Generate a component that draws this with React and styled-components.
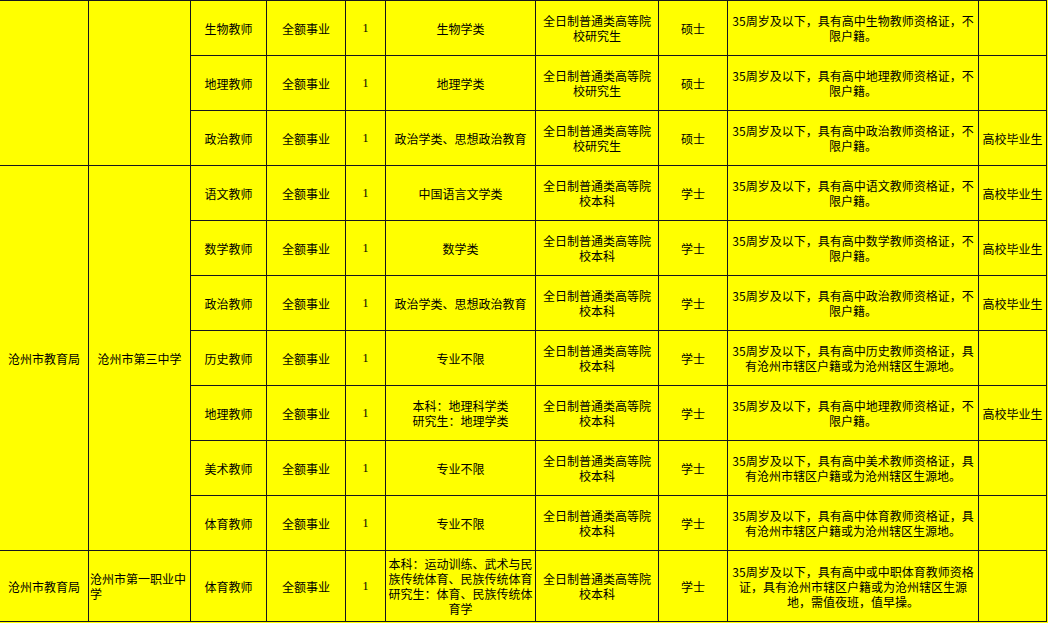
import React from 'react';
import styled, { createGlobalStyle } from 'styled-components';

const GlobalStyle = createGlobalStyle`
  html, body {
    margin: 0;
    padding: 0;
    background: #ffff00;
  }
  body {
    font-family: "Noto Sans CJK SC", "Noto Sans", sans-serif;
    color: #000;
  }
`;

const Sheet = styled.div`
  display: grid;
  grid-template-columns: 88px 101px 75px 78px 39px 149px 122px 68px 250px 67px;
  grid-template-rows: repeat(10, 54px) 70px;
  gap: 1px;
  padding: 1px 1px 1px 0;
  width: max-content;
  background: #16161e;
`;

const Cell = styled.div`
  grid-row: span ${(p) => p.$span || 1};
  background: #ffff00;
  display: flex;
  align-items: center;
  justify-content: ${(p) => (p.$align === 'left' ? 'flex-start' : 'center')};
  text-align: ${(p) => p.$align || 'center'};
  padding: 0 ${(p) => (p.$align === 'left' ? '1px' : '0')};
  font-size: 12px;
  line-height: 15px;
  white-space: nowrap;
  overflow: hidden;
`;

const Count = styled(Cell)`
  font-family: "Liberation Serif", serif;
  font-size: 12px;
`;

const Lines = ({ text }) =>
  text.split('\n').map((line, i, arr) => (
    <React.Fragment key={i}>
      {line}
      {i < arr.length - 1 && <br />}
    </React.Fragment>
  ));

const GRAD = '全日制普通类高等院\n校研究生';
const UNDER = '全日制普通类高等院\n校本科';
const req = (s) => `35周岁及以下，具有高中${s}教师资格证，不\n限户籍。`;
const reqLocal = (s) => `35周岁及以下，具有高中${s}教师资格证，具\n有沧州市辖区户籍或为沧州辖区生源地。`;
const POLI = '政治学类、思想政治教育';

const rows = [
  ['生物教师', '生物学类', GRAD, '硕士', req('生物'), ''],
  ['地理教师', '地理学类', GRAD, '硕士', req('地理'), ''],
  ['政治教师', POLI, GRAD, '硕士', req('政治'), '高校毕业生'],
  ['语文教师', '中国语言文学类', UNDER, '学士', req('语文'), '高校毕业生'],
  ['数学教师', '数学类', UNDER, '学士', req('数学'), '高校毕业生'],
  ['政治教师', POLI, UNDER, '学士', req('政治'), '高校毕业生'],
  ['历史教师', '专业不限', UNDER, '学士', reqLocal('历史'), ''],
  ['地理教师', '本科：地理科学类\n研究生：地理学类', UNDER, '学士', req('地理'), '高校毕业生'],
  ['美术教师', '专业不限', UNDER, '学士', reqLocal('美术'), ''],
  ['体育教师', '专业不限', UNDER, '学士', reqLocal('体育'), ''],
  [
    '体育教师',
    '本科：运动训练、武术与民\n族传统体育、民族传统体育\n研究生：体育、民族传统体\n育学',
    UNDER,
    '学士',
    '35周岁及以下，具有高中或中职体育教师资格\n证，具有沧州市辖区户籍或为沧州辖区生源\n地，需值夜班，值早操。',
    '',
  ],
];

// merged department / school cells, keyed by the row they start on
const groups = {
  0: { span: 3, dept: '', school: '' },
  3: { span: 7, dept: '沧州市教育局', school: '沧州市第三中学' },
  10: { span: 1, dept: '沧州市教育局', school: '沧州市第一职业中\n学', left: true },
};

const App = () => (
  <>
    <GlobalStyle />
    <Sheet>
      {rows.map(([post, major, edu, degree, note, extra], i) => {
        const g = groups[i];
        return (
          <React.Fragment key={i}>
            {g && (
              <>
                <Cell $span={g.span}>{g.dept}</Cell>
                <Cell $span={g.span} $align={g.left ? 'left' : undefined}>
                  <div><Lines text={g.school} /></div>
                </Cell>
              </>
            )}
            <Cell>{post}</Cell>
            <Cell>全额事业</Cell>
            <Count>1</Count>
            <Cell>
              <div><Lines text={major} /></div>
            </Cell>
            <Cell>
              <div><Lines text={edu} /></div>
            </Cell>
            <Cell>{degree}</Cell>
            <Cell>
              <div><Lines text={note} /></div>
            </Cell>
            <Cell>{extra}</Cell>
          </React.Fragment>
        );
      })}
    </Sheet>
  </>
);

export default App;
